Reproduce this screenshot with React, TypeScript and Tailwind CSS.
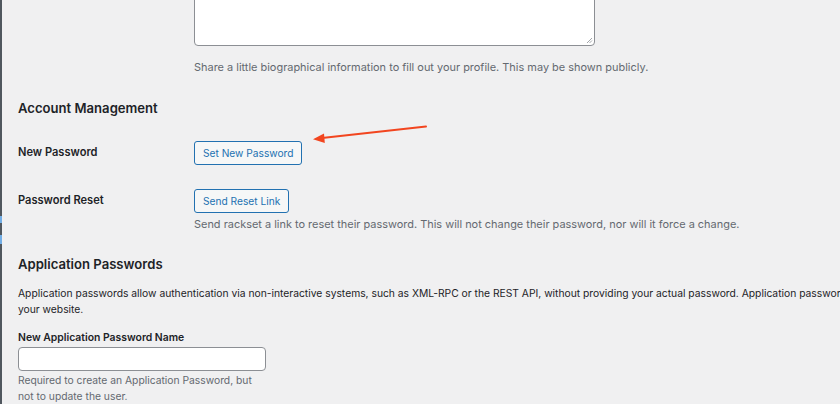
import React from "react";

const font = { fontFamily: "Inter, 'Noto Sans', sans-serif" };

function Arrow() {
	return (
		<svg className="pointer-events-none absolute left-0 top-0" width="840" height="404" viewBox="0 0 840 404">
			<line x1="426" y1="126.5" x2="322" y2="138" stroke="#f2451f" strokeWidth="2" strokeLinecap="round" />
			<polygon points="313,139.2 324,133.5 324.8,143" fill="#f2451f" />
		</svg>
	);
}

function Row({ label, children, top }: { label: string; children: React.ReactNode; top: string }) {
	return (
		<div className={`flex ${top}`}>
			<div className="w-[176px] shrink-0 pt-[3px] text-[11.1px] font-semibold leading-[16px] text-[#1d2327]">{label}</div>
			<div className="flex flex-col">{children}</div>
		</div>
	);
}

function Button({ children }: { children: React.ReactNode }) {
	return (
		<button
			type="button"
			className="h-[24px] w-fit rounded-[3px] border border-[#2271b1] bg-[#f6f7f7] px-[8px] text-[10.2px] leading-[22px] text-[#2271b1]">
			{children}
		</button>
	);
}

export default function App() {
	return (
		<div className="relative flex h-[404px] w-[840px] overflow-hidden bg-[#f0f0f1]" style={font}>
			<div className="relative w-[2px] shrink-0 bg-[#50575e]">
				<div className="absolute left-0 top-[216px] h-[7px] w-[2px] bg-[#72aee6]" />
				<div className="absolute left-0 top-[235px] h-[9px] w-[2px] bg-[#72aee6]" />
			</div>

			<div className="flex w-[1000px] shrink-0 flex-col pl-[16px]">
				<div className="ml-[176px] flex flex-col">
					<div className="relative -mt-[74px] h-[120px] w-[401px] rounded-[4px] border border-[#8c8f94] bg-white">
						<svg className="absolute bottom-[1px] right-[1px]" width="7" height="7" viewBox="0 0 7 7">
							<line x1="1" y1="6" x2="6" y2="1" stroke="#8c8f94" strokeWidth="0.8" />
							<line x1="3.5" y1="6" x2="6" y2="3.5" stroke="#8c8f94" strokeWidth="0.8" />
						</svg>
					</div>
					<p className="mt-[13px] text-[10.95px] leading-[16px] text-[#646970]">
						Share a little biographical information to fill out your profile. This may be shown publicly.
					</p>
				</div>

				<h2 className="mt-[24px] text-[13.1px] font-semibold leading-[18px] text-[#1d2327]">Account Management</h2>

				<Row label="New Password" top="mt-[24px]">
					<Button>Set New Password</Button>
				</Row>

				<Row label="Password Reset" top="mt-[24px]">
					<Button>Send Reset Link</Button>
					<p className="mt-[3px] text-[10.95px] leading-[16px] text-[#646970]">
						Send rackset a link to reset their password. This will not change their password, nor will it force a change.
					</p>
				</Row>

				<h2 className="mt-[23px] text-[13.1px] font-semibold leading-[18px] text-[#1d2327]">Application Passwords</h2>

				<p className="mt-[12px] whitespace-nowrap text-[10.3px] leading-[16px] text-[#1d2327]">
					Application passwords allow authentication via non-interactive systems, such as XML-RPC or the REST API, without
					providing your actual password. Application passwords can be easily revoked. They cannot be used for traditional
					logins to
					<br />
					your website.
				</p>

				<label className="mt-[13px] text-[10.4px] font-semibold leading-[16px] text-[#1d2327]">New Application Password Name</label>
				<input
					type="text"
					className="mt-[1px] h-[24px] w-[248px] rounded-[4px] border border-[#8c8f94] bg-white px-[6px] text-[10.3px] outline-none"
				/>
				<p className="mt-[1px] w-[248px] text-[10.3px] leading-[16px] text-[#646970]">
					Required to create an Application Password, but not to update the user.
				</p>
			</div>

			<Arrow />
		</div>
	);
}
